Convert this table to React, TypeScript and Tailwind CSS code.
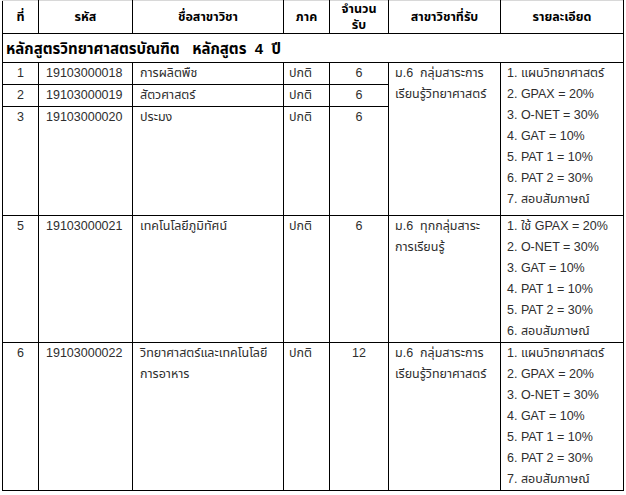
import React from 'react'

type Group = {
  rows: { no: string; code: string; name: string[]; term: string; seats: string }[]
  major: string[]
  details: string[]
  heights: string[]
}

const groups: Group[] = [
  {
    rows: [
      { no: '1', code: '19103000018', name: ['การผลิตพืช'], term: 'ปกติ', seats: '6' },
      { no: '2', code: '19103000019', name: ['สัตวศาสตร์'], term: 'ปกติ', seats: '6' },
      { no: '3', code: '19103000020', name: ['ประมง'], term: 'ปกติ', seats: '6' },
    ],
    major: ['ม.6  กลุ่มสาระการ', 'เรียนรู้วิทยาศาสตร์'],
    details: [
      '1. แผนวิทยาศาสตร์',
      '2. GPAX = 20%',
      '3. O-NET = 30%',
      '4. GAT = 10%',
      '5. PAT 1 = 10%',
      '6. PAT 2 = 30%',
      '7. สอบสัมภาษณ์',
    ],
    heights: ['h-[21px]', 'h-[21px]', 'h-[109px]'],
  },
  {
    rows: [{ no: '5', code: '19103000021', name: ['เทคโนโลยีภูมิทัศน์'], term: 'ปกติ', seats: '6' }],
    major: ['ม.6  ทุกกลุ่มสาระ', 'การเรียนรู้'],
    details: [
      '1. ใช้ GPAX = 20%',
      '2. O-NET = 30%',
      '3. GAT = 10%',
      '4. PAT 1 = 10%',
      '5. PAT 2 = 30%',
      '6. สอบสัมภาษณ์',
    ],
    heights: ['h-[127px]'],
  },
  {
    rows: [
      {
        no: '6',
        code: '19103000022',
        name: ['วิทยาศาสตร์และเทคโนโลยี', 'การอาหาร'],
        term: 'ปกติ',
        seats: '12',
      },
    ],
    major: ['ม.6  กลุ่มสาระการ', 'เรียนรู้วิทยาศาสตร์'],
    details: [
      '1. แผนวิทยาศาสตร์',
      '2. GPAX = 20%',
      '3. O-NET = 30%',
      '4. GAT = 10%',
      '5. PAT 1 = 10%',
      '6. PAT 2 = 30%',
      '7. สอบสัมภาษณ์',
    ],
    heights: ['h-[148px]'],
  },
]

const cell = 'border border-black align-top p-0'
const head = 'border border-black border-t-[#d8d8d8] align-middle'

function Lines({ items }: { items: string[] }) {
  return (
    <>
      {items.map((t, i) => (
        <div key={i} className="whitespace-pre">
          {t}
        </div>
      ))}
    </>
  )
}

export default function App() {
  return (
    <div
      className="w-[626px] h-[495px] bg-white pl-[2px] text-[12.5px] leading-[21px] text-[#2e2e2e]"
      style={{ fontFamily: "'Liberation Sans', 'Noto Sans Thai', 'DejaVu Sans', sans-serif" }}
    >
      <table className="table-fixed border-collapse w-[621px]">
        <colgroup>
          <col className="w-[36px]" />
          <col className="w-[94px]" />
          <col className="w-[151px]" />
          <col className="w-[46px]" />
          <col className="w-[59px]" />
          <col className="w-[112px]" />
          <col className="w-[123px]" />
        </colgroup>
        <thead>
          <tr className="h-[33px] font-bold text-black">
            <th className={head}>ที่</th>
            <th className={head}>รหัส</th>
            <th className={head}>ชื่อสาขาวิชา</th>
            <th className={head}>ภาค</th>
            <th className={`${head} leading-[16px]`}>
              จำนวน
              <br />
              รับ
            </th>
            <th className={head}>สาขาวิชาที่รับ</th>
            <th className={head}>รายละเอียด</th>
          </tr>
        </thead>
        <tbody>
          <tr className="h-[29px]">
            <td
              colSpan={7}
              className="border border-black align-middle pl-[3px] text-[15px] font-bold text-black whitespace-pre"
            >
              {'หลักสูตรวิทยาศาสตรบัณฑิต   หลักสูตร  4  ปี'}
            </td>
          </tr>
          {groups.map((g, gi) =>
            g.rows.map((r, ri) => (
              <tr key={`${gi}-${ri}`} className={g.heights[ri]}>
                <td className={`${cell} text-center`}>{r.no}</td>
                <td className={`${cell} pl-[7px]`}>{r.code}</td>
                <td className={`${cell} pl-[7px]`}>
                  <Lines items={r.name} />
                </td>
                <td className={`${cell} pl-[5px]`}>{r.term}</td>
                <td className={`${cell} text-center`}>{r.seats}</td>
                {ri === 0 && (
                  <>
                    <td rowSpan={g.rows.length} className={`${cell} pl-[6px]`}>
                      <Lines items={g.major} />
                    </td>
                    <td rowSpan={g.rows.length} className={`${cell} pl-[6px]`}>
                      <Lines items={g.details} />
                    </td>
                  </>
                )}
              </tr>
            ))
          )}
        </tbody>
      </table>
    </div>
  )
}
